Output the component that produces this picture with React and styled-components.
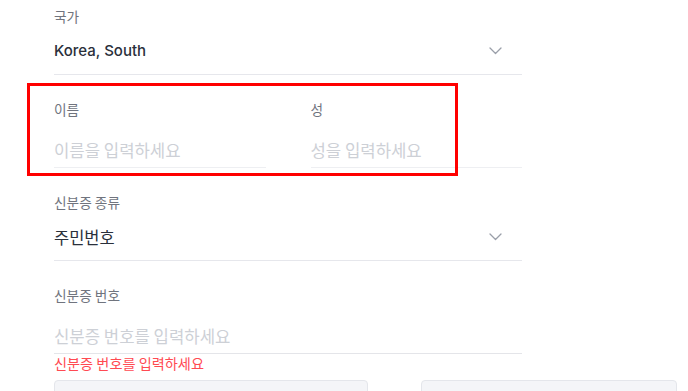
import React from 'react';
import styled, { createGlobalStyle } from 'styled-components';

const GlobalStyle = createGlobalStyle`
    html, body {
        margin: 0;
        padding: 0;
        background: #ffffff;
    }
    body {
        font-family: "Noto Sans CJK KR", "Noto Sans", sans-serif;
        overflow: hidden;
    }
`

const Form = styled.div`
    display: flex;
    flex-direction: column;
    width: 468px;
    padding: 7px 0 0 54px;
`

const Field = styled.div`
    display: flex;
    flex-direction: column;
    margin-top: ${props => props.$first ? '0' : '25px'};
`

const Label = styled.div`
    font-size: 13.7px;
    line-height: 18px;
    height: 18px;
    color: #70747e;
`

const SelectRow = styled.div`
    display: flex;
    align-items: center;
    justify-content: space-between;
    padding: 16px 20px 13px 0;
    border-bottom: 1px solid #e6e7ec;

    .value {
        font-family: ${props => props.$korean ? '"Noto Sans CJK KR", sans-serif' : 'Inter, "Noto Sans", sans-serif'};
        font-size: ${props => props.$korean ? '16.5px' : '15px'};
        font-weight: ${props => props.$korean ? 400 : 500};
        line-height: 20px;
        height: 20px;
        color: #2a303b;
    }

    svg {
        display: block;
    }
`

const InputRow = styled.div`
    padding: 22px 0 7px 0;
    border-bottom: 1px solid ${props => props.$error ? '#e4e5e9' : '#eeeff2'};

    .placeholder {
        font-size: 16.7px;
        line-height: 20px;
        height: 20px;
        color: #cdd0d6;
        white-space: nowrap;
    }
`

const NameRow = styled.div`
    position: relative;
    display: grid;
    grid-template-columns: 1fr 1fr;
    column-gap: 45px;
    margin-top: 25px;

    &::after {
        content: '';
        position: absolute;
        top: -17px;
        left: -27px;
        right: 64px;
        bottom: -8px;
        border: 3px solid #ff0000;
        box-sizing: border-box;
        pointer-events: none;
    }
`

const ErrorText = styled.div`
    margin-top: 1px;
    font-size: 14.2px;
    line-height: 16px;
    color: #ff4a52;
`

const ButtonRow = styled.div`
    display: grid;
    grid-template-columns: 314px 256px;
    column-gap: 53px;
    margin-top: 9px;
`

const GhostBox = styled.div`
    height: 40px;
    background: #f4f5f8;
    border: 1px solid #e4e6eb;
    border-radius: 4px;
`

const Chevron = () => (
    <svg width="13" height="8" viewBox="0 0 13 8" fill="none">
        <path d="M1 1 L6.5 6.5 L12 1" stroke="#9a9fa9" strokeWidth="1.3" strokeLinecap="round" strokeLinejoin="round" />
    </svg>
)

const SelectField = ({ label, value, korean, first }) => (
    <Field $first={first}>
        <Label>{label}</Label>
        <SelectRow $korean={korean}>
            <div className='value'>{value}</div>
            <Chevron />
        </SelectRow>
    </Field>
)

const InputField = ({ label, placeholder }) => (
    <Field $first>
        <Label>{label}</Label>
        <InputRow>
            <div className='placeholder'>{placeholder}</div>
        </InputRow>
    </Field>
)

const App = () => {
    return (
        <>
            <GlobalStyle />
            <Form>
                <SelectField first label='국가' value='Korea, South' />

                <NameRow>
                    <InputField label='이름' placeholder='이름을 입력하세요' />
                    <InputField label='성' placeholder='성을 입력하세요' />
                </NameRow>

                <SelectField label='신분증 종류' value='주민번호' korean />

                <Field>
                    <Label>신분증 번호</Label>
                    <InputRow $error>
                        <div className='placeholder'>신분증 번호를 입력하세요</div>
                    </InputRow>
                    <ErrorText>신분증 번호를 입력하세요</ErrorText>
                </Field>

                <ButtonRow>
                    <GhostBox />
                    <GhostBox />
                </ButtonRow>
            </Form>
        </>
    )
}

export default App
